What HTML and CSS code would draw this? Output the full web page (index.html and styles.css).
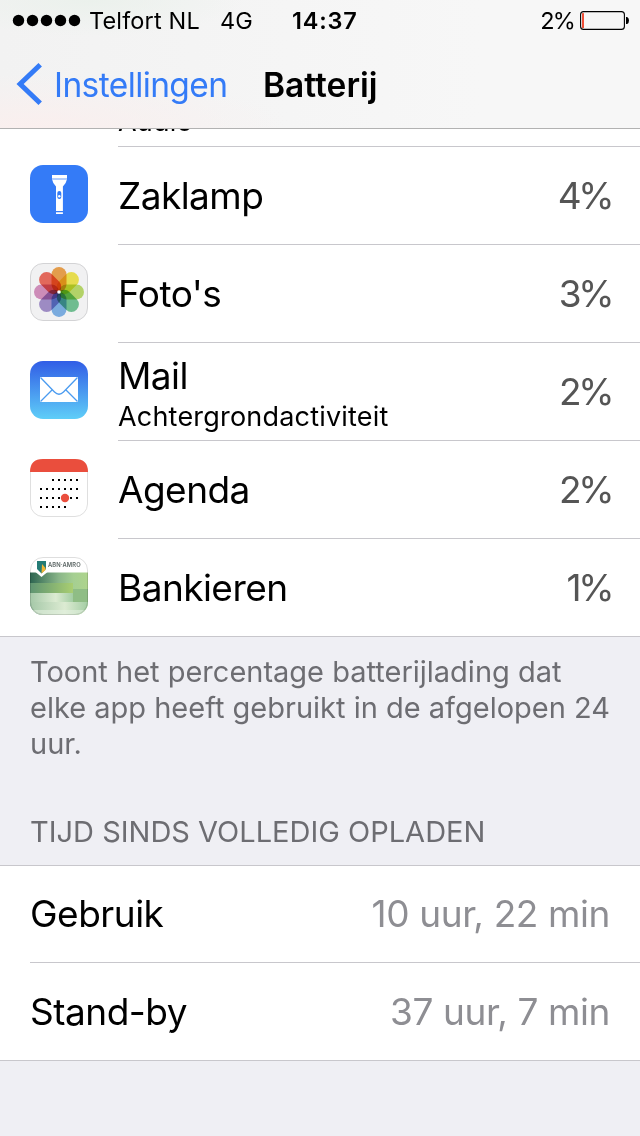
FILE: index.html
```html
<!DOCTYPE html>
<html lang="nl">
<head>
  <meta charset="UTF-8">
  <meta name="viewport" content="width=device-width, initial-scale=1.0">
  <title>Batterij</title>
  <link rel="stylesheet" href="styles.css">
</head>
<body>

  <!-- Status bar and navigation -->
  <header>
    <div class="status-bar">
      <svg class="signal" width="70" height="14" viewBox="0 0 70 14">
        <circle cx="6.5" cy="6.5" r="5.7"/><circle cx="20.5" cy="6.5" r="5.7"/><circle cx="34.5" cy="6.5" r="5.7"/><circle cx="48.5" cy="6.5" r="5.7"/><circle cx="62.5" cy="6.5" r="5.7"/>
      </svg>
      <span class="carrier">Telfort NL</span>
      <span class="network">4G</span>
      <span class="clock">14:37</span>
      <span class="charge">2%</span>
      <svg class="battery" width="50" height="20" viewBox="0 0 50 20">
        <rect x="0.6" y="0.6" width="43.8" height="17.8" rx="3" fill="none" stroke="#000" stroke-width="1.1"/>
        <rect x="2" y="2" width="2" height="15" rx="0.6" fill="#ee4e37"/>
        <path d="M46 6h1.2q1.8 1 1.8 3.5t-1.8 3.5H46z" fill="#000"/>
      </svg>
    </div>
    <nav>
      <svg class="chevron" width="28" height="44" viewBox="0 0 28 44">
        <path d="M24.2 1.8 4.1 21l20.1 19.2" fill="none" stroke="#347bf7" stroke-width="5"/>
      </svg>
      <a class="back" href="#">Instellingen</a>
      <h1>Batterij</h1>
    </nav>
  </header>

  <!-- Battery usage per app -->
  <ul class="apps">
    <li class="app app-cut"><span class="sub">Audio</span></li>
    <li class="app">
      <svg class="icon" viewBox="0 0 58 58">
        <rect width="58" height="58" rx="13" fill="#347bf7"/>
        <path d="M22 10h15v3H22zM22.3 15h14.4q-.3 3-3.8 6.5V46H26V21.5q-3.4-3.5-3.7-6.5zM26 47.3h6.9V49H26z" fill="#fff"/>
        <path d="M22 13h15v2H22z" fill="#b3cefc"/>
        <rect x="27.3" y="26" width="4" height="8" rx="2" fill="#347bf7"/>
        <circle cx="29.3" cy="31.3" r="1.2" fill="#fff"/>
      </svg>
      <span class="name">Zaklamp</span>
      <span class="value">4%</span>
    </li>
    <li class="app">
      <svg class="icon" viewBox="0 0 58 58">
        <rect x="0.5" y="0.5" width="57" height="57" rx="12.5" fill="#f1f1f2" stroke="#d3d3d5"/>
        <g class="petals">
          <rect x="21.5" y="4" width="15" height="25" rx="7.4" fill="#f09a38"/>
          <rect x="21.5" y="4" width="15" height="25" rx="7.4" fill="#f3e63a" transform="rotate(45 29 29)"/>
          <rect x="21.5" y="4" width="15" height="25" rx="7.4" fill="#b5db5a" transform="rotate(90 29 29)"/>
          <rect x="21.5" y="4" width="15" height="25" rx="7.4" fill="#62c08a" transform="rotate(135 29 29)"/>
          <rect x="21.5" y="4" width="15" height="25" rx="7.4" fill="#70abe8" transform="rotate(180 29 29)"/>
          <rect x="21.5" y="4" width="15" height="25" rx="7.4" fill="#9a84c8" transform="rotate(225 29 29)"/>
          <rect x="21.5" y="4" width="15" height="25" rx="7.4" fill="#d485ba" transform="rotate(270 29 29)"/>
          <rect x="21.5" y="4" width="15" height="25" rx="7.4" fill="#ee5a4a" transform="rotate(315 29 29)"/>
        </g>
        <circle cx="29" cy="29" r="1.8" fill="#fff"/>
      </svg>
      <span class="name">Foto's</span>
      <span class="value">3%</span>
    </li>
    <li class="app">
      <svg class="icon" viewBox="0 0 58 58">
        <defs>
          <linearGradient id="mail" x1="0" y1="0" x2="0" y2="1">
            <stop offset="0" stop-color="#315de6"/>
            <stop offset="1" stop-color="#5fcef8"/>
          </linearGradient>
        </defs>
        <rect width="58" height="58" rx="13" fill="url(#mail)"/>
        <rect x="10" y="16" width="38" height="25" fill="#fff"/>
        <path d="M10.5 16.5 24.5 31q4.5 4.5 9 0l14-14.5M10.5 40.5 22 29M47.5 40.5 36 29" fill="none" stroke="#4a9bf0" stroke-width="1.3"/>
      </svg>
      <span class="name">Mail<span class="sub">Achtergrondactiviteit</span></span>
      <span class="value">2%</span>
    </li>
    <li class="app">
      <svg class="icon" viewBox="0 0 58 58">
        <rect x="0.5" y="0.5" width="57" height="57" rx="12.5" fill="#fff" stroke="#dfdfdf"/>
        <path d="M0 13Q0 0 13 0h32q13 0 13 13z" fill="#ea4e3d"/>
        <path d="M22 21h28M10 30h40M10 39h40M10 48h28" fill="none" stroke="#000" stroke-width="2" stroke-dasharray="2 4"/>
        <circle cx="35" cy="39" r="4.2" fill="#ea4e3d"/>
      </svg>
      <span class="name">Agenda</span>
      <span class="value">2%</span>
    </li>
    <li class="app">
      <svg class="icon" viewBox="0 0 58 58">
        <defs>
          <clipPath id="tile"><rect width="58" height="58" rx="13"/></clipPath>
          <linearGradient id="field">
            <stop offset="0" stop-color="#2c6450"/>
            <stop offset="0.5" stop-color="#8ab689"/>
            <stop offset="0.75" stop-color="#a5cf92"/>
            <stop offset="1" stop-color="#aed48d"/>
          </linearGradient>
          <linearGradient id="band">
            <stop offset="0" stop-color="#5f9472"/>
            <stop offset="1" stop-color="#a9ce72"/>
          </linearGradient>
          <linearGradient id="mist">
            <stop offset="0" stop-color="#a5c8a8"/>
            <stop offset="0.6" stop-color="#dcebd2"/>
            <stop offset="1" stop-color="#a3cda3"/>
          </linearGradient>
        </defs>
        <g clip-path="url(#tile)">
          <rect width="58" height="58" fill="#fff"/>
          <rect y="15.5" width="58" height="43" fill="url(#field)"/>
          <rect y="26" width="43" height="10" fill="url(#band)"/>
          <rect y="36" width="43" height="9" fill="url(#mist)"/>
          <rect x="43" y="32" width="15" height="13" fill="#8fbd85"/>
          <rect y="45" width="58" height="13" fill="url(#mist)"/>
          <rect y="53" width="58" height="5" fill="#e2f0df" opacity="0.6"/>
          <path d="M5.5 15h12L11.5 20z" fill="#fff"/>
        </g>
        <path d="M7 4h9v8l-4.5 4.5L7 12z" fill="#247b75"/>
        <path d="M12 7l3.5 4v2l-4 3.5z" fill="#efb534"/>
        <text class="bank" x="18" y="10.2">ABN·AMRO</text>
        <rect x="0.5" y="0.5" width="57" height="57" rx="12.5" fill="none" stroke="#000" stroke-opacity="0.13"/>
      </svg>
      <span class="name">Bankieren</span>
      <span class="value">1%</span>
    </li>
  </ul>

  <p class="note">Toont het percentage batterijlading dat<br>elke app heeft gebruikt in de afgelopen 24<br>uur.</p>

  <!-- Time since last full charge -->
  <h2>TIJD SINDS VOLLEDIG OPLADEN</h2>
  <ul class="times">
    <li class="time"><span class="label">Gebruik</span><span class="duration">10 uur, 22 min</span></li>
    <li class="time"><span class="label">Stand-by</span><span class="duration">37 uur, 7 min</span></li>
  </ul>

</body>
</html>
```
FILE: styles.css
```css
/* Global styles */
* {
  box-sizing: border-box;
}

body {
  margin: 0;
  width: 640px;
  height: 1136px;
  overflow: hidden;
  background-color: #efeff4;
  color: #000;
  font-family: Inter, "Liberation Sans", sans-serif;
}

ul {
  list-style: none;
  margin: 0;
  padding: 0;
}

/* Header */
header {
  height: 129px;
  border-bottom: 1px solid #b2b2b2;
  background: radial-gradient(ellipse at 14% 0, #ebf1ec, transparent 20%),
    radial-gradient(ellipse at 5% 100%, #faefee, transparent 30%),
    linear-gradient(90deg, #f2f2f2, #f7f7f7 75%);
}

.status-bar {
  display: flex;
  align-items: center;
  height: 42px;
  padding: 0 10px 0 12px;
  font-size: 23.5px;
  line-height: 42px;
}

.signal {
  margin-right: 7px;
}

.carrier {
  width: 131px;
  letter-spacing: 0.15px;
}

.network {
  width: 72px;
}

.clock {
  font-weight: 600;
  letter-spacing: 0.8px;
}

.charge {
  margin-left: auto;
  margin-right: 6px;
  letter-spacing: -1.8px;
}

nav {
  display: flex;
  align-items: center;
  height: 86px;
  padding-left: 16px;
  line-height: 86px;
}

.back {
  width: 209px;
  margin-left: 10px;
  color: #347bf7;
  font-size: 33.5px;
  letter-spacing: -0.6px;
  text-decoration: none;
}

h1 {
  margin: 0;
  font-size: 33.5px;
  font-weight: 600;
}

/* App list */
.apps {
  background-color: #fff;
  border-bottom: 1px solid #c8c7cc;
}

.app {
  position: relative;
  display: flex;
  height: 98px;
  padding: 18px 27px 0 30px;
}

.app::after {
  content: "";
  position: absolute;
  left: 118px;
  right: 0;
  bottom: 0;
  height: 1px;
  background-color: #c8c7cc;
}

.app:last-child {
  height: 97px;
}

.app:last-child::after {
  display: none;
}

/* Row scrolled under the header */
.app-cut {
  height: 18px;
  padding: 0 0 0 118px;
  overflow: hidden;
  align-items: flex-end;
}

.icon {
  width: 58px;
  height: 58px;
  margin-right: 30px;
}

.petals rect {
  mix-blend-mode: multiply;
  opacity: 0.88;
}

.bank {
  font-size: 5.8px;
  font-weight: 600;
  letter-spacing: 0.1px;
  fill: #5a6463;
}

.name {
  font-size: 37px;
  letter-spacing: -0.55px;
  line-height: 61px;
}

.name:has(.sub) {
  margin-top: -7px;
  line-height: 44px;
}

.sub {
  display: block;
  font-size: 27px;
  letter-spacing: 0.2px;
  line-height: 38px;
}

.app-cut .sub {
  margin-bottom: 6px;
}

.value {
  margin-left: auto;
  color: #555;
  font-size: 37px;
  letter-spacing: -3.5px;
  line-height: 61px;
  margin-right: 2px;
}

/* Section texts */
.note {
  margin: 0;
  padding: 17px 30px 0;
  color: #6d6d72;
  font-size: 29px;
  line-height: 36px;
}

h2 {
  margin: 0;
  padding: 52px 30px 0;
  height: 103px;
  color: #6d6d72;
  font-size: 29px;
  font-weight: 400;
  line-height: 36px;
}

/* Usage times */
.times {
  background-color: #fff;
  border-top: 1px solid #c8c7cc;
  border-bottom: 1px solid #c8c7cc;
}

.time {
  display: flex;
  justify-content: space-between;
  height: 96px;
  padding-right: 30px;
  margin-left: 30px;
  font-size: 37px;
  line-height: 96px;
}

.time + .time {
  height: 98px;
  border-top: 1px solid #c8c7cc;
  line-height: 98px;
}

.label {
  letter-spacing: -0.5px;
}

.duration {
  color: #8e8e93;
  letter-spacing: -0.4px;
}
```
